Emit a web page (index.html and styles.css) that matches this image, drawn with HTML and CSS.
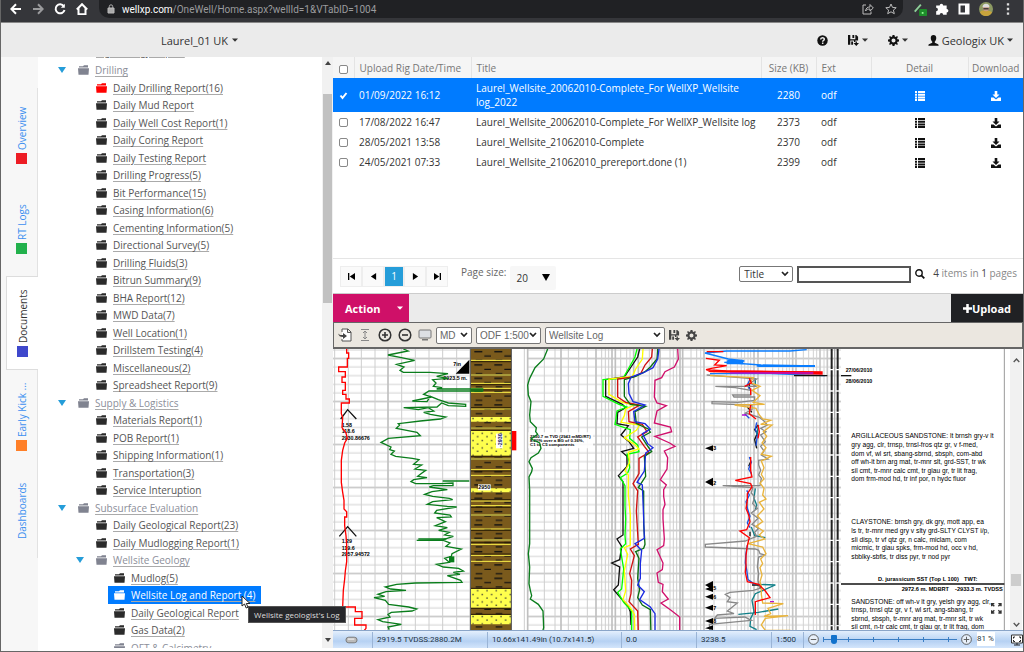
FILE: index.html
```
<!DOCTYPE html>
<html lang="en">
<head>
  <meta charset="UTF-8">
  <meta name="viewport" content="width=device-width, initial-scale=1.0">
  <title>OneWell – Documents</title>
  <link rel="stylesheet" href="styles.css">
</head>
<body>
  <svg class="sprite" aria-hidden="true">
    <symbol id="folder" viewBox="0 0 11 10"><path d="M1 1.200h4l1-1h4v2.300H1z M0 3.300h11l-.5 6.500H.5z"/></symbol>
    <symbol id="list" viewBox="0 0 10 10"><path d="M0 0h2v2H0zM3 0h7v2H3zM0 2.700h2v2H0zM3 2.700h7v2H3zM0 5.400h2v2H0zM3 5.400h7v2H3zM0 8h2v2H0zM3 8h7v2H3z"/></symbol>
    <symbol id="download" viewBox="0 0 10 10"><path d="M3.700 0h2.600v3.500h2.200L5 7 1.500 3.500h2.200zM0 6.500h2.500L5 8.500l2.500-2H10V10H0z"/></symbol>
    <symbol id="caret" viewBox="0 0 6 4"><path d="M0 .5h6L3 3.700z"/></symbol>
    <symbol id="save" viewBox="0 0 12 12"><path fill-rule="evenodd" d="M0 0h2.500v4.500h5.500V0h1L11 2v4H8v1.500H6.500V6H2.500v4.500H0zM4.800 0h2v3.300h-2zM3.500 7h2v3.500h-2zM8.300 7h1.400v1.800H12L9 12 6 8.800h2.300z"/></symbol>
    <symbol id="gear" viewBox="0 0 12 12"><path fill-rule="evenodd" d="M5 0h2l.4 1.700 1 .4L9.900 1.200 10.800 2.100 9.900 3.600l.4 1L12 5v2l-1.700.4-.4 1 .9 1.500-.9.9-1.500-.9-1 .4L7 12H5l-.4-1.700-1-.4-1.500.9-.9-.9.9-1.500-.4-1L0 7V5l1.700-.4.4-1-.9-1.500.9-.9 1.500.9 1-.4zM6 3.800A2.200 2.200 0 1 0 6 8.200 2.200 2.200 0 1 0 6 3.800z"/></symbol>
  </svg>

  <div class="browser">
    <nav class="browser-nav">
      <button aria-label="Back"><svg viewBox="0 0 12 12"><path d="M11 6H1.500M6 1.300 1.300 6 6 10.700"/></svg></button>
      <button class="dim" aria-label="Forward"><svg viewBox="0 0 12 12"><path d="M1 6h9.500M6 1.300 10.700 6 6 10.700"/></svg></button>
      <button aria-label="Reload"><svg viewBox="0 0 12 12"><path d="M9.800 3.200A4.500 4.500 0 1 0 10.500 7"/><path d="M10.800.8v4H6.800z" fill="#fff" stroke="none"/></svg></button>
      <button aria-label="Home"><svg viewBox="0 0 12 12"><path d="M.8 6.500 6 1.200l5.200 5.300M2.500 5v6.200h7V5"/></svg></button>
    </nav>
    <div class="address">
      <svg class="lock" viewBox="0 0 8 10"><path d="M1 4h6v5H1z" fill="#aaa"/><path d="M2.300 4V2.500a1.700 1.700 0 0 1 3.400 0V4" fill="none" stroke="#aaa"/></svg>
      <span class="url"><b>wellxp.com</b>/OneWell/Home.aspx?wellId=1&amp;VTabID=1004</span>
      <button aria-label="Share"><svg viewBox="0 0 12 12"><path d="M4 2H1v9h8V8.500M3.500 8c.5-3 2-4 4.500-4V1.500L11.300 5 8 8V6C6 6 4.500 6.500 3.500 8z"/></svg></button>
      <button aria-label="Bookmark"><svg viewBox="0 0 12 12"><path d="m6 1 1.500 3.400 3.700.3-2.800 2.400.9 3.600L6 8.800l-3.300 1.900.9-3.600L.8 4.700l3.700-.3z"/></svg></button>
    </div>
    <div class="extensions">
      <button aria-label="Color picker"><svg viewBox="0 0 16 16"><path d="M2 11 9 3" stroke="#8fd19a" stroke-width="2"/><rect x="7" y="8" width="9" height="8" rx="1" fill="#1e8e2b" stroke="none"/><path d="M10 12.500h2" stroke="#9f9"/></svg></button>
      <button aria-label="Extensions"><svg viewBox="0 0 12 12"><path d="M1 3h3a1.500 1.500 0 1 1 3 0h3v3a1.500 1.500 0 1 1 0 3v2H7a1.500 1.500 0 1 0-3 0H1V8a1.500 1.500 0 1 0 0-3z" fill="#fff" stroke="none"/></svg></button>
      <button aria-label="Side panel"><svg viewBox="0 0 14 14"><path d="M2.500 2.500h9v9h-9z"/><path d="M8 2h4v10H8z" fill="#fff" stroke="none"/></svg></button>
      <button aria-label="Profile"><svg viewBox="0 0 16 16"><circle cx="8" cy="8" r="8" fill="#8d9a62" stroke="none"/><path d="M1 12C3 9 5 10 8 10s5 0 7 2a8 8 0 0 1-14 0z" fill="#c9a43c" stroke="none"/><circle cx="8" cy="7" r="3.500" fill="#c99a84" stroke="none"/><path d="M4 6a4 4 0 0 1 8 0z" fill="#ddd" stroke="none"/><path d="M5 7h6v1.500H5z" fill="#333" stroke="none"/></svg></button>
      <button aria-label="Menu"><svg viewBox="0 0 12 12"><path d="M5 1h2v2H5zM5 5h2v2H5zM5 9h2v2H5z" fill="#ddd" stroke="none"/></svg></button>
    </div>
  </div>

  <header class="topbar">
    <button class="well">Laurel_01 UK <svg class="caret"><use href="#caret"/></svg></button>
    <div class="top-tools">
      <button aria-label="Help"><svg class="ico" viewBox="0 0 12 12"><circle cx="6" cy="6" r="5.700"/><path d="M4 4.800C4 2.300 8 2.400 8 4.500 8 6 6.200 5.800 6.200 7.300M6.200 8.300v1.500" fill="none" stroke="#ebebeb" stroke-width="1.600"/></svg></button>
      <button aria-label="Save"><svg class="ico"><use href="#save"/></svg><svg class="caret"><use href="#caret"/></svg></button>
      <button aria-label="Settings"><svg class="ico"><use href="#gear"/></svg><svg class="caret"><use href="#caret"/></svg></button>
      <button><svg class="ico" viewBox="0 0 12 12"><path d="M6 0c2 0 3 1.300 3 3.200S8 6.800 7.400 7.200v1.200L11 10q.6.400.6 1.800H.4Q.4 10.400 1 10l3.600-1.600V7.200C4 6.800 3 5.100 3 3.200S4 0 6 0z"/></svg>Geologix UK<svg class="caret"><use href="#caret"/></svg></button>
    </div>
  </header>

  <main>
    <nav class="tabs">
      <a href="#"><i class="red"></i>Overview</a>
      <a href="#"><i class="green"></i>RT Logs</a>
      <a href="#" class="active"><i class="blue"></i>Documents</a>
      <a href="#"><i class="orange"></i>Early Kick ...</a>
      <a href="#">Dashboards</a>
    </nav>

    <aside class="tree">
      <ul>
        <li class="l2"><a href="#">Rig Geology Report</a></li>
        <li class="l1 group"><svg><use href="#folder"/></svg><a href="#">Drilling</a></li>
        <li class="l2 new"><svg><use href="#folder"/></svg><a href="#">Daily Drilling Report(16)</a></li>
        <li class="l2"><svg><use href="#folder"/></svg><a href="#">Daily Mud Report</a></li>
        <li class="l2"><svg><use href="#folder"/></svg><a href="#">Daily Well Cost Report(1)</a></li>
        <li class="l2"><svg><use href="#folder"/></svg><a href="#">Daily Coring Report</a></li>
        <li class="l2"><svg><use href="#folder"/></svg><a href="#">Daily Testing Report</a></li>
        <li class="l2"><svg><use href="#folder"/></svg><a href="#">Drilling Progress(5)</a></li>
        <li class="l2"><svg><use href="#folder"/></svg><a href="#">Bit Performance(15)</a></li>
        <li class="l2"><svg><use href="#folder"/></svg><a href="#">Casing Information(6)</a></li>
        <li class="l2"><svg><use href="#folder"/></svg><a href="#">Cementing Information(5)</a></li>
        <li class="l2"><svg><use href="#folder"/></svg><a href="#">Directional Survey(5)</a></li>
        <li class="l2"><svg><use href="#folder"/></svg><a href="#">Drilling Fluids(3)</a></li>
        <li class="l2"><svg><use href="#folder"/></svg><a href="#">Bitrun Summary(9)</a></li>
        <li class="l2"><svg><use href="#folder"/></svg><a href="#">BHA Report(12)</a></li>
        <li class="l2"><svg><use href="#folder"/></svg><a href="#">MWD Data(7)</a></li>
        <li class="l2"><svg><use href="#folder"/></svg><a href="#">Well Location(1)</a></li>
        <li class="l2"><svg><use href="#folder"/></svg><a href="#">Drillstem Testing(4)</a></li>
        <li class="l2"><svg><use href="#folder"/></svg><a href="#">Miscellaneous(2)</a></li>
        <li class="l2"><svg><use href="#folder"/></svg><a href="#">Spreadsheet Report(9)</a></li>
        <li class="l1 group"><svg><use href="#folder"/></svg><a href="#">Supply &amp; Logistics</a></li>
        <li class="l2"><svg><use href="#folder"/></svg><a href="#">Materials Report(1)</a></li>
        <li class="l2"><svg><use href="#folder"/></svg><a href="#">POB Report(1)</a></li>
        <li class="l2"><svg><use href="#folder"/></svg><a href="#">Shipping Information(1)</a></li>
        <li class="l2"><svg><use href="#folder"/></svg><a href="#">Transportation(3)</a></li>
        <li class="l2"><svg><use href="#folder"/></svg><a href="#">Service Interuption</a></li>
        <li class="l1 group"><svg><use href="#folder"/></svg><a href="#">Subsurface Evaluation</a></li>
        <li class="l2"><svg><use href="#folder"/></svg><a href="#">Daily Geological Report(23)</a></li>
        <li class="l2"><svg><use href="#folder"/></svg><a href="#">Daily Mudlogging Report(1)</a></li>
        <li class="l2 group"><svg><use href="#folder"/></svg><a href="#">Wellsite Geology</a></li>
        <li class="l3"><svg><use href="#folder"/></svg><a href="#">Mudlog(5)</a></li>
        <li class="l3 selected"><svg><use href="#folder"/></svg><a href="#" aria-describedby="tip">Wellsite Log and Report (4)</a></li>
        <li class="l3"><svg><use href="#folder"/></svg><a href="#">Daily Geological Report</a></li>
        <li class="l3"><svg><use href="#folder"/></svg><a href="#">Gas Data(2)</a></li>
        <li class="l3 empty"><svg><use href="#folder"/></svg><a href="#">OFT &amp; Calcimetry</a></li>
      </ul>
      <div class="tree-scroll"><span class="up"></span><span class="thumb"></span><span class="down"></span></div>
      <svg class="cursor" viewBox="0 0 10 14"><path d="M1 1v10l2.500-2 1.700 4 1.800-.8-1.700-3.700H9z" fill="#fff" stroke="#222"/></svg>
      <span class="tooltip" id="tip" role="tooltip">Wellsite geologist's Log</span>
    </aside>

    <section class="content">
      <div class="files">
        <table>
          <colgroup><col class="c-check"><col class="c-date"><col><col class="c-size"><col class="c-ext"><col class="c-detail"><col class="c-down"></colgroup>
          <thead>
            <tr>
              <th class="all"><input type="checkbox" aria-label="Select all"></th>
              <th>Upload Rig Date/Time</th>
              <th>Title</th>
              <th class="num">Size (KB)</th>
              <th>Ext</th>
              <th class="mid">Detail</th>
              <th class="mid">Download</th>
            </tr>
          </thead>
          <tbody>
            <tr class="selected">
              <td><input type="checkbox" aria-label="Select row 1" checked></td>
              <td>01/09/2022 16:12</td>
              <td>Laurel_Wellsite_20062010-Complete_For WellXP_Wellsite log_2022</td>
              <td class="num">2280</td><td>odf</td>
              <td class="mid"><svg><use href="#list"/></svg></td><td class="mid"><svg><use href="#download"/></svg></td>
            </tr>
            <tr>
              <td><input type="checkbox" aria-label="Select row 2"></td>
              <td>17/08/2022 16:47</td>
              <td>Laurel_Wellsite_20062010-Complete_For WellXP_Wellsite log</td>
              <td class="num">2373</td><td>odf</td>
              <td class="mid"><svg><use href="#list"/></svg></td><td class="mid"><svg><use href="#download"/></svg></td>
            </tr>
            <tr>
              <td><input type="checkbox" aria-label="Select row 3"></td>
              <td>28/05/2021 13:58</td>
              <td>Laurel_Wellsite_21062010-Complete</td>
              <td class="num">2370</td><td>odf</td>
              <td class="mid"><svg><use href="#list"/></svg></td><td class="mid"><svg><use href="#download"/></svg></td>
            </tr>
            <tr>
              <td><input type="checkbox" aria-label="Select row 4"></td>
              <td>24/05/2021 07:33</td>
              <td>Laurel_Wellsite_21062010_prereport.done (1)</td>
              <td class="num">2399</td><td>odf</td>
              <td class="mid"><svg><use href="#list"/></svg></td><td class="mid"><svg><use href="#download"/></svg></td>
            </tr>
          </tbody>
        </table>
      </div>

      <div class="pager">
        <div class="pages">
          <button aria-label="First page"><svg viewBox="0 0 8 8"><path d="M0 0h1.500v8H0zM8 0v8L2 4z"/></svg></button>
          <button aria-label="Previous page"><svg viewBox="0 0 8 8"><path d="M7 0v8L1 4z"/></svg></button>
          <button class="current">1</button>
          <button aria-label="Next page"><svg viewBox="0 0 8 8"><path d="M1 0v8l6-4z"/></svg></button>
          <button aria-label="Last page"><svg viewBox="0 0 8 8"><path d="M6.500 0H8v8H6.500zM0 0v8l6-4z"/></svg></button>
        </div>
        <label for="pageSize">Page size:</label>
        <select id="pageSize" class="page-size"><option>20</option></select>
        <div class="search">
          <select aria-label="Search field" class="field"><option>Title</option></select>
          <input type="text" aria-label="Search text">
          <button aria-label="Search"><svg viewBox="0 0 10 10"><circle cx="4" cy="4" r="3.200" fill="none" stroke="#111" stroke-width="1.400"/><path d="m6.300 6.300 3 3" stroke="#111" stroke-width="1.800"/></svg></button>
        </div>
        <span class="count"><b>4</b> items in <b>1</b> pages</span>
      </div>

      <div class="actions">
        <button class="action">Action <svg class="caret"><use href="#caret"/></svg></button>
        <button class="upload"><svg viewBox="0 0 10 10"><path d="M3.600 0h2.800v3.600H10v2.800H6.400V10H3.600V6.400H0V3.600h3.600z"/></svg>Upload</button>
      </div>

      <div class="toolbar">
        <div class="tools">
          <button aria-label="Go to depth"><svg viewBox="0 0 14 14"><path d="M4 4V1h6l3 3v9H4v-2M9.500 1v3.500H13" fill="#fff" stroke="#555"/><path d="M0 5.500c2 2 3 1.500 5 1.500V5l4 3-4 3V9C2 9 1 8 0 5.500z"/></svg></button>
          <button aria-label="Fit height"><svg viewBox="0 0 14 14"><path d="M3 1.500h8M3 12.500h8M7 3v8M5 5l2-2 2 2M5 9l2 2 2-2" fill="none" stroke="#888"/></svg></button>
          <button aria-label="Zoom in"><svg viewBox="0 0 14 14"><circle cx="7" cy="7" r="5.800" fill="none" stroke="#333" stroke-width="1.500"/><path d="M4 7h6M7 4v6" stroke="#333" stroke-width="1.600"/></svg></button>
          <button aria-label="Zoom out"><svg viewBox="0 0 14 14"><circle cx="7" cy="7" r="5.800" fill="none" stroke="#333" stroke-width="1.500"/><path d="M4 7h6" stroke="#333" stroke-width="1.600"/></svg></button>
          <button aria-label="Screen"><svg viewBox="0 0 14 14"><rect x="1" y="2" width="12" height="8" rx="1" fill="#dcdfe4" stroke="#777"/><path d="M4 11h6v1.500H4z" fill="#777"/></svg></button>
        </div>
        <select aria-label="Depth type" class="w-depth"><option>MD</option></select>
        <select aria-label="Scale" class="w-scale"><option>ODF 1:500</option></select>
        <select aria-label="Log" class="w-log"><option>Wellsite Log</option></select>
        <div class="tools small">
          <button aria-label="Save view"><svg><use href="#save"/></svg></button>
          <button aria-label="View settings"><svg><use href="#gear"/></svg></button>
        </div>
      </div>

      <div class="viewer">
        <svg class="log" viewBox="9 12 2025 843" preserveAspectRatio="xMinYMin slice">
          <defs>
            <pattern id="rows" x="0" y="38" width="2000" height="129" patternUnits="userSpaceOnUse">
              <path d="M0 2h2000" stroke="#c2c2c2" stroke-width="5"/>
              <path d="M0 28h2000M0 54h2000M0 80h2000M0 106h2000" stroke="#d2d2d2" stroke-width="3"/>
            </pattern>
            <pattern id="shale" x="423" y="12" width="60" height="40" patternUnits="userSpaceOnUse">
              <rect width="60" height="40" fill="#7a5a1c"/>
              <path d="M10 8h24M40 21h20M14 34h20" stroke="#111" stroke-width="4"/>
            </pattern>
            <pattern id="sand" x="423" y="258" width="28" height="22" patternUnits="userSpaceOnUse">
              <rect width="28" height="22" fill="#ffff4d"/>
              <path d="M4 5h4v4H4zM18 15h4v4h-4z" fill="#333"/>
            </pattern>
          </defs>

          <!-- grid -->
          <rect x="9" y="12" width="410" height="843" fill="url(#rows)"/>
          <rect x="593" y="12" width="490" height="843" fill="url(#rows)"/>
          <rect x="1083" y="12" width="450" height="843" fill="url(#rows)"/>
          <path d="M14 12v843M55 12v843M94 12v843M135 12v843M215 12v843M256 12v843M297 12v843M338 12v843M380 12v843M583 12v843M643 12v843M675 12v843M715 12v843M746 12v843M772 12v843M815 12v843M826 12v843M836 12v843M872 12v843M890 12v843M900 12v843M958 12v843M966 12v843M975 12v843M984 12v843M1020 12v843M1030 12v843M1040 12v843M1083 12v843M1100 12v843" stroke="#cecece" stroke-width="3"/>
          <path d="M174 12v843M593 12v843M693 12v843M798 12v843M846 12v843M856 12v843M911 12v843M925 12v843M990 12v843M1050 12v843M1058 12v843M1122 12v843" stroke="#c0c0c0" stroke-width="5"/>
          <path d="M1112 12v843M1152 12v843M1190 12v843M1202 12v843M1222 12v843M1234 12v843M1244 12v843M1254 12v843M1262 12v843M1306 12v843M1328 12v843M1346 12v843M1358 12v843M1370 12v843M1378 12v843M1420 12v843M1436 12v843M1450 12v843M1460 12v843M1482 12v843" stroke="#d2d2d2" stroke-width="3"/>
          <path d="M1272 12v843M1284 12v843M1388 12v843M1398 12v843M1470 12v843M1492 12v843" stroke="#c6c6c6" stroke-width="5"/>
          <path d="M1505 12v843M1523 12v843" stroke="#222" stroke-width="6" stroke-dasharray="60 4"/>
          <path d="M1514 12v843" stroke="#aaa" stroke-width="4"/>

          <!-- lithology -->
          <rect x="423" y="12" width="120" height="843" fill="url(#shale)"/>
          <path d="M423 216h120v14H423zM423 258h120v74H423zM423 430h120v12H423zM423 732h120v56H423zM423 810h120v28H423z" fill="url(#sand)"/>
          <path d="M423 46h120M423 115h120M423 130h120M423 142h120M423 192h120M423 374h120M423 391h120M423 468h120M423 482h120M423 552h120M423 598h120M423 631h120M423 649h120" stroke="#fff34a" stroke-width="3"/>
          <path d="M423 90h120M423 250h120M423 342h120M423 510h120M423 585h120" stroke="#a89a3a" stroke-width="6"/>
          <path d="M423 50h120M423 119h120M423 135h120M423 188h120M423 256h120M423 334h120M423 378h120M423 464h120M423 487h120M423 556h120M423 593h120M423 627h120M423 730h120M423 790h120M423 808h120" stroke="#2a1d05" stroke-width="3"/>
          <path d="M421 12v843M544 12v843" stroke="#444" stroke-width="3"/>
          <rect x="546" y="258" width="13" height="58" fill="red"/>
          <rect x="498" y="266" width="20" height="44" fill="#fff"/>
          <text transform="translate(515 306) rotate(-90)" class="t tb" fill="#226">-2930</text>
          <rect x="444" y="418" width="38" height="18" fill="#fff"/>
          <text x="445" y="433" class="t tb">2950</text>

          <!-- drilling track -->
          <path d="M377 86h41V44z"/>
          <text x="370" y="64" class="t tb">7in</text>
          <text x="340" y="106" class="t tb">2923.5 m.</text>
          <path d="M32 222 53 194 79 222M28 574 53 545 79 574" fill="none" stroke="#111" stroke-width="4"/>
          <text x="35" y="245" class="t tb">1.58</text><text x="35" y="264" class="t tb">118.6</text><text x="35" y="284" class="t tb">2930.86676</text>
          <text x="35" y="595" class="t tb">1.29</text><text x="35" y="614" class="t tb">119.6</text><text x="35" y="634" class="t tb">2957.94572</text>
          <path class="trace" stroke="red" d="M50 12v12h6v16h-4v26H26v14h20v16H36v16h10v24h-8v12h10v14h10v12H34v32l4 12-2 30 12 16 4 16-8 14-6 22-4 30v66l4 30 4 24v26l8 8v16h-6v26l4 30 2 28v50l-4 28-2 24-4 34-2 50h38v14h20v20H74v20h34v10l-10 12v10h18v10h29v16h-24v10H66v12h28v6"/>
          <path class="trace" stroke="#0a7d1c" d="M220 12l14 6-60 12 40 8 40 8-54 12 22 8-12 10 10 6h80l54 4-34 8 34 6-46 4 10 10-8 10 26 4-16 4h138v6H297l-16 10 24 8-58 12 44 2 10-16 24 10 30 10 52 4v6l-52-2-20-8-14 12-100 2 44 6 30-6 16 10-30 4 20 6 46 8-16 6-60 6-66 8 4 4-10 10 62 12 10 10-96 8-22 12 30 14-4 8 14 4-10 10 14 6 50 6 20 4-16 14 24 2-20 12 32 4-14 10-10 8 28 4-40 6-8 6 14 6h76l36-2v8H310l-12 4 54 8-46 6-22 8 24 6 50 6 10 4-60 6-16 8 60 6 28 2-60 10-6 8 46 6 4 6-44 2 26 12-30 12 36 6-26 8 32 6-14 8 26 4-30 10-80 2h80l20 8-12 10 46 8-28 14-2 8-20 6 14 12-38 6 20 8 46 4 14 8-30 4 20 6-38 4 40 14 4 6-140 2-56 4-34 8 16 6 46 4-60 4-24 8 20 6-32 4 34 8 10 12 60 8 24 6-14 6-62 4-10 6 6 8-36 8 14 6 56 8-40 8 4 8"/>
          <path d="M338 408h80M265 582h84" stroke="#0a7d1c" stroke-width="5"/>
          <path d="M357 634h16v18h-16z" fill="#0a7d1c"/>

          <!-- gas track -->
          <g transform="translate(510 0)">
            <path d="M85 262h194v48H85z" fill="#fff" opacity=".9"/>
            <text x="90" y="278" class="t tn">2930.7 m TVD (2943 mMD/RT)</text>
            <text x="90" y="291" class="t tn">8.20% over a BG of 0.36%,</text>
            <text x="90" y="304" class="t tn">C1 to C5 components</text>
            <path class="trace" stroke="#0a7d1c" d="M143 12l-12 30-26 26-16 32-6 20 2 30 8 20-4 40 2 20 18 18-2 12 6 8-20 14 26 12 4 16-8 14-22 14-6 12 10 20-2 10-8 16 2 40v160l-4 30 4 40-2 50 4 20 4 16-4 10 24 16 14 20 2 50-6 22"/>
            <path class="trace" stroke="#111" d="M419 12l-6 24-24 36-16 24-56 8v50l50 24 10 10-24 14-2 34 34 6-22 28 24 20 14 20-36 10 16 14v30l-26 28 14 18v160l-18 12 14 22-6 40-24 10 24 12-4 54-14 14 20 24 22 22 8 20 2 40"/>
            <path class="trace" stroke="#0f0" d="M411 12l-6 24-20 36-16 28-60 4v50l48 24 24 8-30 12-4 30-2 10 46 16-2 26 24 20 4 20-36 8 6 20 2 20-6 16-22 14 14 24v60l2 40-2 50 2 24-16 16 10 60-6 60-12 10 18 30 24 26v60"/>
            <path class="trace" stroke="#ff0" d="M429 12l-2 30-20 30-10 22-70 8v46l40 24 36 8-26 12-4 20-10 20 56 8-10 16-36 22 30 20 14 14-32 10 4 30-14 26 10 12v60l6 60v90l-18 8 10 20-10 50 4 60-8 26 22 24 12 20 2 70"/>
            <path class="trace" stroke="#d01010" d="M457 12l-2 24-20 24-12 24-24 12-46 6v54l24 16 42 8-34 20 2 30 40 8 14 22-28 16 20 28 14 18-30 18v46l-18 30 14 22-4 60 6 100-24 14 12 20-14 54 6 20-2 40-6 24 26 28 2 70"/>
            <path class="trace" stroke="#0a7010" d="M473 12l-2 30-20 24-16 14-28 14-34 10v50l18 24 46 6-32 16 4 36 36 16 6 10-26 14 20 30 10 14-22 14 4 60-22 34 16 10v100l4 60-4 12-24 10 10 20-4 60 6 34-6 24 14 22 24 14 2 80"/>
            <path class="trace" stroke="#1b2be0" d="M477 12l-4 30-14 26-30 16-36 12-8 20 2 30 12 24 36 10-34 20 4 30 30 6 16 16-24 14 16 30 16 12-22 16-4 54-22 34 16 8 4 100 2 60-28 16 20 20-4 40v44l-8 20 20 20-14 24 32 22 14 20v70"/>
            <path class="trace" stroke="#d0106c" d="M533 12l2 30-12 24-28 14-10 18-20 8-2 50 8 18 28 8-28 16-8 36 48 12 4 14-50 14 44 20 16 10-32 14 10 20-2 34-20 32 18 16-8 14v20l4 24-6 16v28l4 60-2 20-20 12 18 40-2 20-16 10 4 28 14 6-2 22 18 22-22 12 30 22 26 20v70"/>
          </g>

          <!-- resistivity track -->
          <g transform="translate(1080 0)">
            <path class="trace" stroke="#0a7dff" d="M350 14l-50 4H110l-65 6 70 18 48 6-60 4 110 8 160 3H200M130 48h30M60 86h180l165 6"/>
            <path d="M112 44h48v14h-50zM205 60h170v6H205z" fill="#0a7dff"/>
            <path class="trace" stroke="#111" d="M312 92h100M178 112v20M172 186l14 16M204 240l-10 14 8 10-8 20 6 26M182 350l-6 14M170 470v20M180 560v14M186 720h20l10 14"/>
            <path class="trace" stroke="#1d50e0" d="M180 104l-8 16 10 16M164 206l14 14M200 232l-4 20 6 20-4 30M178 336l6 16-8 20 8 14M170 436l8 14-10 20 4 20 8 24-8 20 8 14M172 600l-4 24-2 30 4 20 4 30 20 14"/>
            <path class="trace" stroke="#107f88" d="M184 546l10 26 32 6M196 100v20M206 240l-6 30M196 430l-4 30 8 20-4 14M206 718l50 2-60 26-10 20 6 34-10 20-2 24 20 10M145 808l60-6 60-10"/>
            <path class="trace" stroke="#888" d="M50 90l100 8 50 4-20 12 20 10H76l60 4 46 8v14H128l4 6h62v10l-50 6-78-2v6l120 4v14l-20 10 44 14 12 10 10 12-20 10 16 10-16 10 14 20-14 14 10 14-8 12 10 6 10 6-28 4v14l6 16-6 14 8 10-4 22H98l90 6-4 16 10 12-6 20 14 14-18 14 20 16-18 18 20 12-12 12 6 12-20 8-14 6-120 10v8l150 6 10 4 4 10 14 4-18 6-4 30 4 20-2 20 6 24-20 6-70 6-14 6 14 10-8 12 30 4-30 24 20 8-50 4-8 10 90-4 20 10-126 12 2 20-10 8 24 16-10 8 6 10"/>
            <path class="trace" stroke="#e9b43c" d="M60 92l130 6-10 14 30 12-24 12 24 16-20 20 34 6-90 2 64 10 10 20 10 12 24 4-30 12 34 2-26 20 10 14-14 20 12 14-14 20 30 6-30 14 8 20-8 20 8 14-12 12 12 16-4 20 10 12-20 10 14 20-20 20 16 18-20 14 22 14-12 12 16 12-50 14 44 10 10 20-16 16 6 14-8 12 6 22-6 20 4 14v24l4 26 62 2-46 14 8 16-20 8 72-2-68 8-12 20 12 16h76l-58 8-20 10-40 4 10 20v20h80"/>
            <path class="trace" stroke="red" d="M50 20h50M48 40l40 6-14 14 36 2-46 8-16 4 60 4 284 4M178 100l6 14-20 10M182 130v20M182 180l-4 26 20 16M204 240l4 20-4 20M182 336v40l4 20-50 10 46 10 4 10-14 20v20l-4 24 8 20 4 20-10 24-20 4 28 20-6 24-4 30v30l-2 20 6 28 34 8 20 20 14 20-44 12v40"/>
            <path d="M48 76l350 3v10L60 82z" fill="red"/>
            <path class="trace" stroke="#b010d0" d="M120 84h250M156 210h14M240 770h12"/>
            <path d="M45 310l24-9v18zM45 411l24-13v26zM45 720l24-12v26zM45 732l24-9v18zM45 755l24-9v18zM45 788l24-9v18zM45 828l24-9v18zM45 850l24-9v14z"/>
            <g class="t tb"><text x="70" y="316">3</text><text x="70" y="420">2</text><text x="70" y="735">5</text><text x="70" y="761">6</text><text x="70" y="794">7</text><text x="70" y="834">8</text></g>
          </g>

          <!-- descriptions -->
          <g transform="translate(1515 0)">
            <path d="M18 12h490v843H18z" fill="#fff"/>
            <path d="M508 12v843" stroke="#999" stroke-width="3"/>
            <path d="M18 92h31" stroke="#111" stroke-width="4"/>
            <path d="M18 717h490" stroke="#111" stroke-width="4"/>
            <g class="t tb"><text x="32" y="80">27/06/2010</text><text x="32" y="115">28/06/2010</text></g>
            <g class="t tm">
              <text x="129" y="708">D. jurassicum SST (Top L 100)</text><text x="387" y="708">TWT:</text>
              <text x="200" y="739">2972.6 m.</text><text x="281" y="739">MDBRT</text><text x="360" y="739">-2933.3 m. TVDSS</text>
            </g>
            <g class="t td">
              <text x="49" y="280">ARGILLACEOUS SANDSTONE: lt brnsh gry-v lt</text>
              <text x="49" y="306">gry agg, clr, trnsp, trnsl-fros qtz gr, v f-med,</text>
              <text x="49" y="332">dom vf, wl srt, sbang-sbrnd, sbsph, com-abd</text>
              <text x="49" y="358">off wh-lt brn arg mat, tr-mnr slt, grd-SST, tr wk</text>
              <text x="49" y="384">sil cmt, tr-mnr calc cmt, tr glau gr, tr lit frag,</text>
              <text x="49" y="409">dom frm-mod hd, tr inf por, n hydc fluor</text>
              <text x="49" y="538">CLAYSTONE: brnsh gry, dk gry, mott app, ea</text>
              <text x="49" y="564">ls tr, tr-mnr med gry v slty grd-SLTY CLYST i/p,</text>
              <text x="49" y="590">sli disp, tr vf qtz gr, n calc, miclam, com</text>
              <text x="49" y="615">micmic, tr glau spks, frm-mod hd, occ v hd,</text>
              <text x="49" y="641">sbblky-sbfis, tr diss pyr, tr nod pyr</text>
              <text x="49" y="776">SANDSTONE: off wh-v lt gry, yelsh gry agg, clr,</text>
              <text x="49" y="802">trnsp, trnsl qtz gr, v f, wl srt, ang-sbang, tr</text>
              <text x="49" y="828">sbrnd, sbsph, tr-mnr arg mat, tr-mnr slt, tr wk</text>
              <text x="49" y="852">sil cmt, n-tr calc cmt, tr glau gr, tr lit frag, dom</text>
            </g>
            <path d="M470 784v-8h8M490 776h8v8M470 796v8h8M490 804h8v-8M470 776l8 8M498 776l-8 8M470 804l8-8M498 804l-8-8" fill="none" stroke="#333" stroke-width="4"/>
          </g>
        </svg>
        <div class="log-scroll">
          <svg viewBox="0 0 10 6"><path d="M1 5l4-4 4 4"/></svg>
          <span></span>
          <svg viewBox="0 0 10 6"><path d="M1 1l4 4 4-4"/></svg>
        </div>
      </div>

      <footer class="status">
        <span class="s-disk"><svg viewBox="0 0 14 8"><rect x="1" y="1" width="12" height="6" rx="3" fill="#bbb" stroke="#777"/><path d="M3 3h7" stroke="#fff"/></svg></span>
        <span class="s-depth">2919.5 TVDSS:2880.2M</span>
        <span class="s-size">10.66x141.49in (10.7x141.5)</span>
        <span class="s-zero">0.0</span>
        <span class="s-pos">3238.5</span>
        <span class="s-scale">1:500</span>
        <span class="s-zoom">
          <button aria-label="Zoom out"><svg viewBox="0 0 12 12"><circle cx="6" cy="6" r="5.300"/><path d="M3 6h6"/></svg></button>
          <input type="range" aria-label="Zoom" min="0" max="100" value="6">
          <button aria-label="Zoom in"><svg viewBox="0 0 12 12"><circle cx="6" cy="6" r="5.300"/><path d="M3 6h6M6 3v6"/></svg></button>
        </span>
        <span class="s-pct">81 %</span>
        <button class="s-screen" aria-label="Full screen"><svg viewBox="0 0 12 12"><path d="M.5 1h11v8H.5z" fill="#fff" stroke="#333"/><path d="M2.500 4.500V3H4M8 3h1.500v1.500M2.500 6v1.500H4M8 7.500h1.500V6M3 11h6M6 9v2" fill="none" stroke="#222"/></svg></button>
      </footer>
    </section>
  </main>
</body>
</html>
```
FILE: styles.css
```
* {
  box-sizing: border-box;
}
body {
  display: flex;
  flex-direction: column;
  height: 100vh;
  margin: 0;
  border: 1px solid #666;
  border-top: 0;
  overflow: hidden;
  font-family: "Open Sans", "Noto Sans", sans-serif;
  font-size: 10px;
  color: #333;
  background: #fff;
}
button {
  display: flex;
  align-items: center;
  padding: 0;
  border: 0;
  background: none;
  font: inherit;
  color: inherit;
  cursor: pointer;
}
a {
  color: inherit;
}
.sprite {
  display: none;
}
.caret {
  width: 6px;
  height: 4px;
  fill: currentColor;
}

/* browser bar */
.browser {
  display: flex;
  flex: none;
  height: 23px;
  padding-bottom: 4px;
  background: #35363a;
  border-bottom: 1px solid #888;
}
.browser svg {
  width: 12px;
  height: 12px;
  fill: none;
  stroke: #fff;
  stroke-width: 2;
}
.browser-nav {
  display: flex;
  gap: 10px;
  padding-left: 9px;
  width: 98px;
}
.browser-nav .dim {
  opacity: 0.5;
}
.address {
  display: flex;
  flex: 1;
  align-items: center;
  gap: 11px;
  padding: 0 6px 0 8px;
  background: #202124;
  border-radius: 0 0 10px 10px;
}
.address svg {
  stroke: #bbb;
  stroke-width: 1;
}
.address .lock {
  width: 8px;
  height: 10px;
}
.url {
  flex: 1;
  margin-left: -4px;
  color: #9a9b9e;
  font-family: Roboto, sans-serif;
}
.url b {
  font-weight: normal;
  color: #fff;
}
.extensions {
  display: flex;
  gap: 8px;
  padding: 0 8px 0 10px;
}
.extensions svg {
  width: 14px;
  height: 14px;
}

/* app header */
.topbar {
  display: flex;
  flex: none;
  justify-content: space-between;
  align-items: center;
  height: 34px;
  padding: 0 10px 0 160px;
  background: #ebebeb;
  font-size: 11px;
}
.topbar .well {
  gap: 4px;
}
.top-tools {
  display: flex;
  gap: 20px;
}
.top-tools button {
  gap: 3px;
}
.ico {
  width: 11px;
  height: 11px;
  fill: #111;
}

main {
  display: flex;
  flex: 1;
  min-height: 0;
}

/* side tabs */
.tabs {
  flex: none;
  width: 37px;
  padding-top: 31px;
  background: #f7f7f7;
}
.tabs a {
  display: flex;
  align-items: center;
  justify-content: center;
  gap: 3px;
  width: 32px;
  height: 94px;
  margin-left: 5px;
  border-left: 1px solid #e2e2e2;
  writing-mode: vertical-rl;
  transform: rotate(180deg);
  color: #3b8ff0;
  text-decoration: none;
}
.tabs .active {
  border: 1px solid #ddd;
  border-left: 0;
  background: #fff;
  color: #333;
}
.tabs i {
  width: 11px;
  height: 11px;
}
.red { background: #ed1c24; }
.green { background: #22b14c; }
.blue { background: #3f48cc; }
.orange { background: #ff7f27; }

/* document tree */
.tree {
  position: relative;
  display: flex;
  flex: none;
  justify-content: space-between;
  width: 295px;
}
.tree ul {
  flex: 1;
  margin: 0 0 3px;
  padding: 0;
  list-style: none;
  overflow: hidden;
}
.tree li {
  display: flex;
  align-items: center;
  gap: 6px;
  width: max-content;
  height: 17px;
  padding-right: 6px;
}
.tree li:nth-child(even) {
  height: 18px;
}
.tree li:first-child {
  margin-top: -13px;
  padding-bottom: 4px;
}
.tree li > svg {
  width: 11px;
  height: 10px;
  fill: #2b2b2b;
}
.tree a {
  color: #555;
  text-decoration: underline;
  text-decoration-color: #aaa;
  text-underline-offset: 2px;
}
.l1 { margin-left: 40px; }
.l2 { margin-left: 58px; }
.l3 { margin-left: 70px; padding-left: 6px; }
.group::before {
  content: "";
  width: 0;
  margin-right: 6px;
  margin-left: -20px;
  border: 4px solid transparent;
  border-top: 6px solid #259dd9;
  border-bottom: 0;
}
.tree .group > svg, .tree .empty > svg {
  fill: #808390;
}
.tree .group a, .tree .empty a {
  color: #8b8e99;
}
.tree .new > svg {
  fill: red;
}
.tree .selected {
  background: #007bff;
}
.tree .selected > svg {
  fill: #fff;
}
.tree .selected a {
  color: #fff;
}
.cursor {
  position: absolute;
  left: 203px;
  top: 538px;
  z-index: 3;
  width: 10px;
  height: 14px;
}
.tooltip {
  position: absolute;
  left: 210px;
  top: 549px;
  z-index: 2;
  padding: 0 5px;
  border: 1px solid #555;
  background: #26272b;
  color: #ddd;
  font: 8px/15px "Open Sans", sans-serif;
  white-space: nowrap;
}
.tree-scroll {
  display: flex;
  flex-direction: column;
  align-items: center;
  width: 11px;
  margin-bottom: 3px;
  padding: 4px 0 6px;
  background: #f1f1f1;
}
.tree-scroll .up {
  border: 3px solid transparent;
  border-top: 0;
  border-bottom: 4px solid #444;
}
.tree-scroll .thumb {
  width: 9px;
  height: 36%;
  margin-top: 29px;
  background: #c1c1c1;
}
.tree-scroll .down {
  margin-top: auto;
  border: 3px solid transparent;
  border-bottom: 0;
  border-top: 4px solid #444;
}

/* file list */
.content {
  display: flex;
  flex: 1;
  flex-direction: column;
  min-width: 0;
}
.files {
  height: 202px;
  border-bottom: 1px solid #e5e5e5;
}
.files table {
  width: 100%;
  table-layout: fixed;
  border-collapse: collapse;
}
.c-check { width: 21px; }
.c-date { width: 117px; }
.c-size { width: 55px; }
.c-ext { width: 55px; }
.c-detail { width: 97px; }
.c-down { width: 55px; }
.files th {
  height: 21px;
  padding: 0 5px;
  background: #f5f5f5;
  border-right: 1px solid #e4e4e4;
  color: #777;
  font-weight: normal;
  text-align: left;
  white-space: nowrap;
}
.files .all {
  padding-top: 4px;
}
.files td {
  height: 20px;
  padding: 0 5px;
  line-height: 14px;
}
.files th:last-child {
  border-right: 0;
}
.files .num {
  text-align: center;
}
.files .mid {
  padding: 0;
  text-align: center;
}
.files td svg {
  width: 10px;
  height: 10px;
  vertical-align: middle;
  fill: #111;
}
.files .selected {
  background: #007bff;
  color: #fff;
}
.files .selected td {
  height: 34px;
}
.files .selected svg {
  fill: #fff;
}
.files input {
  display: block;
  width: 9px;
  height: 9px;
  margin: 0 auto;
  appearance: none;
  border: 1px solid #888;
  border-radius: 2px;
  background: #fff;
}
.files input:checked {
  border: 0;
  background: url("data:image/svg+xml,%3Csvg xmlns='http://www.w3.org/2000/svg' viewBox='0 0 9 9'%3E%3Cpath d='M1.500 4.500l2 2.500 4-5' fill='none' stroke='white' stroke-width='2'/%3E%3C/svg%3E") center / 9px 9px no-repeat;
}

/* pager */
.pager {
  display: flex;
  align-items: center;
  height: 35px;
  padding: 0 6px 0 7px;
  border-bottom: 1px solid #ccc;
}
.pages {
  display: flex;
}
.pages button {
  justify-content: center;
  width: 22px;
  height: 21px;
  border: 1px solid #eee;
  background: #fafafa;
}
.pages svg {
  width: 7px;
  height: 7px;
}
.pages .current {
  width: 20px;
  background: #259dd9;
  color: #fff;
}
.pager label {
  margin: 0 4px 8px 13px;
  color: #666;
}
select {
  appearance: none;
  border: 1px solid #777;
  border-radius: 2px;
  background: #fff url("data:image/svg+xml,%3Csvg xmlns='http://www.w3.org/2000/svg' viewBox='0 0 8 6'%3E%3Cpath d='M1 1l3 3 3-3' fill='none' stroke='%23222' stroke-width='1.700'/%3E%3C/svg%3E") no-repeat right 3px center / 8px 6px;
  color: #333;
  font: 10px "Open Sans", sans-serif;
}
.page-size {
  width: 46px;
  height: 24px;
  margin-top: 3px;
  padding-left: 6px;
  border: 0;
  background: #f7f7f7 url("data:image/svg+xml,%3Csvg xmlns='http://www.w3.org/2000/svg' viewBox='0 0 8 7'%3E%3Cpath d='M0 0h8L4 7z'/%3E%3C/svg%3E") no-repeat right 6px center / 8px 7px;
}
.search {
  display: flex;
  align-items: center;
  gap: 4px;
  margin-bottom: 4px;
  margin-left: auto;
}
.search .field {
  width: 54px;
  height: 16px;
  padding-left: 4px;
}
.search input {
  width: 114px;
  height: 17px;
  border: 2px solid #555;
}
.search svg {
  width: 10px;
  height: 10px;
}
.count {
  margin-bottom: 6px;
  padding-left: 8px;
  color: #888;
}
.count b {
  font-weight: normal;
  color: #444;
}

/* action row */
.actions {
  display: flex;
  justify-content: space-between;
  height: 28px;
  background: #ebebeb;
  color: #fff;
  font-size: 11px;
  font-weight: bold;
}
.action {
  justify-content: space-between;
  width: 76px;
  padding: 0 6px 0 12px;
  background: #cf1068;
}
.upload {
  padding: 0 12px;
  background: #202124;
}
.upload svg {
  width: 9px;
  height: 9px;
  fill: #fff;
}

/* viewer toolbar */
.toolbar {
  display: flex;
  align-items: center;
  gap: 4px;
  height: 27px;
  padding-left: 4px;
  border: 1px solid #666;
  border-bottom-width: 2px;
  background: #ebe7e0;
}
.tools {
  display: flex;
  gap: 6px;
}
.tools svg {
  width: 14px;
  height: 14px;
  fill: #444;
}
.small svg {
  width: 11px;
  height: 11px;
}
.toolbar select {
  height: 17px;
  padding-left: 3px;
  color: #666;
  font: 10px "Liberation Sans", sans-serif;
}
.w-depth { width: 36px; }
.w-scale { width: 65px; }
.w-log { width: 120px; }

/* log */
.viewer {
  display: flex;
  flex: 1;
  min-height: 0;
}
.log {
  flex: 1;
  min-width: 0;
  height: 100%;
}
.trace {
  fill: none;
  stroke-width: 4;
}
.t {
  font-family: "Liberation Sans", sans-serif;
}
.tb {
  font-size: 16px;
  font-weight: bold;
}
.tn {
  font-size: 13px;
  font-weight: bold;
}
.tm {
  font-size: 17px;
  font-weight: bold;
}
.td {
  font-size: 20px;
}
.log-scroll {
  display: flex;
  flex-direction: column;
  align-items: center;
  width: 12px;
  margin: 0 1px 0 2px;
  padding: 9px 0 3px;
  background: #f1f1f1;
}
.log-scroll svg {
  width: 7px;
  height: 5px;
  fill: none;
  stroke: #555;
  stroke-width: 2;
}
.log-scroll span {
  width: 10px;
  height: 12px;
  margin: auto 0 36px;
  background: #cdcdcd;
}

/* status bar */
.status {
  display: flex;
  align-items: center;
  height: 18px;
  margin-bottom: 3px;
  border-top: 1px solid #8aa5c8;
  background: linear-gradient(#e3effd, #c0d8f5 45%, #b6d1f3 60%, #d3e5fb);
  color: #234;
  font-family: Roboto, sans-serif;
  font-size: 8px;
  white-space: nowrap;
}
.status span {
  display: flex;
  align-items: center;
}
.status > span {
  height: 16px;
  padding-left: 4px;
  border-right: 1px solid #9ab4d6;
}
.s-disk { width: 40px; }
.s-disk svg {
  width: 13px;
  height: 8px;
  margin-left: 8px;
}
.s-depth { width: 115px; }
.s-size { width: 134px; }
.s-zero { width: 75px; }
.s-pos { width: 75px; }
.s-scale { width: 32px; }
.status .s-zoom {
  flex: 1;
  gap: 4px;
  border: 0;
}
.s-zoom svg {
  width: 11px;
  height: 11px;
  fill: #e8f0fa;
  stroke: #555;
}
.s-zoom input {
  flex: 1;
  min-width: 0;
  height: 14px;
  margin: 0;
  appearance: none;
  background:
    linear-gradient(#3a7ec4, #3a7ec4) center / 100% 1px no-repeat,
    repeating-linear-gradient(90deg, #3a7ec4 0 1px, transparent 1px 25px) center / 100% 5px no-repeat;
}
.s-zoom input::-webkit-slider-thumb {
  appearance: none;
  width: 6px;
  height: 9px;
  border-radius: 1px 1px 3px 3px;
  background: #1272cc;
}
.status .s-pct {
  width: 32px;
  height: 14px;
  margin: 0 2px 2px 5px;
  padding: 0;
  border: 0;
  background: linear-gradient(90deg, #fff 18px, transparent 18px);
}
.s-screen svg {
  width: 12px;
  height: 12px;
}
```
